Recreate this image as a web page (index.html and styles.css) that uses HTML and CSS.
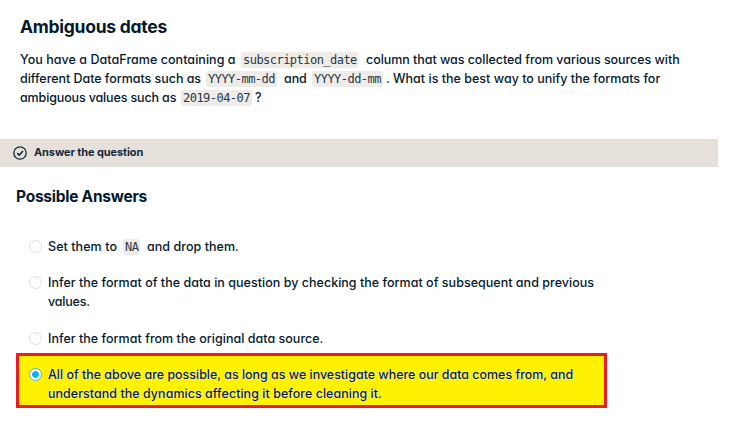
FILE: index.html
```
<!DOCTYPE html>
<html lang="en">
<head>
<meta charset="utf-8">
<title>Ambiguous dates</title>
<link rel="stylesheet" href="styles.css">
</head>
<body>
<main>
  <header class="intro">
    <h1>Ambiguous dates</h1>
    <div class="line"><span class="t1">You have a DataFrame containing a</span><code class="c1">subscription_date</code><span class="t2">column that was collected from various sources with</span></div>
    <div class="line"><span class="t3">different Date formats such as</span><code class="c2">YYYY-mm-dd</code><span class="t4">and</span><code class="c3">YYYY-dd-mm</code><span class="t5">. What is the best way to unify the formats for</span></div>
    <div class="line"><span class="t6">ambiguous values such as</span><code class="c2">2019-04-07</code><span class="t7">?</span></div>
  </header>
  <div class="bar">
    <svg width="14" height="14" viewBox="0 0 14 14" fill="none" stroke="#13283b"><circle cx="7" cy="7" r="6.2" stroke-width="1.3"/><path d="M4.2 7.1 6.2 9.1 10 5.1" stroke-width="1.5"/></svg>
    <span>Answer the question</span>
  </div>
  <h2>Possible Answers</h2>
  <ul class="answers">
    <li class="a1"><i class="radio"></i><div class="line"><span class="s1">Set them to</span><code class="c4">NA</code><span class="s2">and drop them.</span></div></li>
    <li class="a2"><i class="radio"></i><div><p class="s3">Infer the format of the data in question by checking the format of subsequent and previous</p><p class="s4">values.</p></div></li>
    <li class="a3"><i class="radio"></i><p class="s3">Infer the format from the original data source.</p></li>
    <li class="chosen"><i class="radio on"></i><div><p class="s5">All of the above are possible, as long as we investigate where our data comes from, and</p><p class="s6">understand the dynamics affecting it before cleaning it.</p></div></li>
  </ul>
</main>
</body>
</html>
```
FILE: styles.css
```
* { box-sizing: border-box; }
body { margin: 0; background: #fff; color: #05192d; font: 500 12.5px/19px Inter, sans-serif; font-feature-settings: "cv11"; white-space: nowrap; }
h1, h2, p, ul { margin: 0; padding: 0; }
.intro { height: 139px; padding: 15px 0 0 20px; }
h1 { height: 35px; font-size: 17.5px; line-height: 24px; font-weight: 650; letter-spacing: -.26px; }
.line { display: flex; align-items: center; height: 19px; }
code { height: 16px; border-radius: 3px; background: #efebe6; padding-left: 2px; color: #26384a; font: 12px/17px "DejaVu Sans Mono", monospace; letter-spacing: -.53px; }
.c1 { width: 117px; }
.c2, .c3 { width: 71px; }
.c4 { width: 17px; }
.t1 { width: 221px; letter-spacing: .05px; }
.t2 { margin-left: 8px; letter-spacing: -.05px; }
.t3 { width: 186px; letter-spacing: -.04px; }
.t4 { width: 28px; margin-left: 7px; letter-spacing: -.1px; }
.t5 { margin-left: 3px; letter-spacing: .015px; }
.t6 { width: 161px; letter-spacing: -.14px; }
.t7 { margin-left: 3px; }
.bar { display: flex; align-items: center; gap: 7px; width: 718px; height: 28px; padding-left: 13px; background: #e5e1da; color: #13283b; font-size: 11px; font-weight: 700; letter-spacing: -.11px; }
.bar span { line-height: 14px; margin-bottom: 2px; }
h2 { padding: 20px 0 0 16px; font-size: 15.5px; line-height: 20px; font-weight: 650; letter-spacing: -.25px; }
.answers { list-style: none; padding: 30px 0 0 16px; }
li { display: flex; align-items: flex-start; padding-left: 13px; }
.radio { flex: none; width: 13px; height: 13px; margin: 3px 6px 0 0; border: 1px solid #e3dfd8; border-radius: 50%; background: #fff; }
.a1 { padding-bottom: 17px; }
.a2 { padding-bottom: 18px; }
.chosen { width: 591px; height: 55px; margin-top: 5px; padding: 9px 0 0 10px; border: 3px solid #ed1c24; background: #fff200; text-shadow: 0 0 1px #fff, 0 0 1px #fff; }
.on { border-color: #35bdf2; background: radial-gradient(circle, #03b5f5 3px, #fff 3.8px); }
.s1 { width: 75px; letter-spacing: .07px; }
.s2 { margin-left: 7px; letter-spacing: .05px; }
.s3 { letter-spacing: .027px; }
.s4 { letter-spacing: -.2px; }
.s5 { letter-spacing: -.028px; }
.s6 { letter-spacing: .03px; }
```
